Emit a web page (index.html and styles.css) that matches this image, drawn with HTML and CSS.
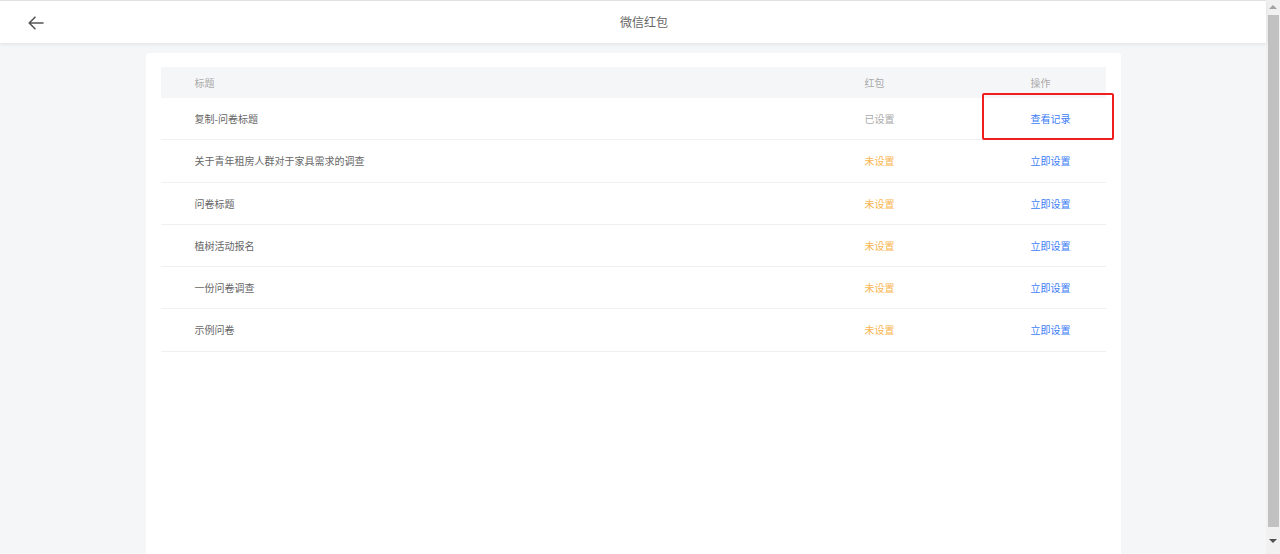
FILE: index.html
```html
<!DOCTYPE html>
<html lang="zh-CN">
<head>
<meta charset="utf-8">
<title>微信红包</title>
<link rel="stylesheet" href="styles.css">
</head>
<body>
<div class="page">
  <header class="topbar">
    <div class="back">
      <svg width="16" height="14" viewBox="0 0 16 14" fill="none" stroke="#555" stroke-width="1.6" stroke-linecap="round" stroke-linejoin="round"><path d="M15 7H1.5M7 1.2L1.2 7L7 12.8"/></svg>
    </div>
    <div class="title">微信红包</div>
    <div></div>
  </header>
  <main class="card">
    <div class="row head">
      <div class="c1">标题</div>
      <div class="c2">红包</div>
      <div class="c3">操作</div>
    </div>
    <div class="row">
      <div class="c1">复制-问卷标题</div>
      <div class="c2 done">已设置</div>
      <div class="c3 link">查看记录</div>
      <div class="mark"></div>
    </div>
    <div class="row">
      <div class="c1">关于青年租房人群对于家具需求的调查</div>
      <div class="c2 todo">未设置</div>
      <div class="c3 link">立即设置</div>
    </div>
    <div class="row">
      <div class="c1">问卷标题</div>
      <div class="c2 todo">未设置</div>
      <div class="c3 link">立即设置</div>
    </div>
    <div class="row">
      <div class="c1">植树活动报名</div>
      <div class="c2 todo">未设置</div>
      <div class="c3 link">立即设置</div>
    </div>
    <div class="row">
      <div class="c1">一份问卷调查</div>
      <div class="c2 todo">未设置</div>
      <div class="c3 link">立即设置</div>
    </div>
    <div class="row">
      <div class="c1">示例问卷</div>
      <div class="c2 todo">未设置</div>
      <div class="c3 link">立即设置</div>
    </div>
  </main>
</div>
<div class="scrollbar">
  <div class="arrow up"></div>
  <div class="thumb"></div>
  <div class="arrow down"></div>
</div>
</body>
</html>
```

FILE: styles.css
```css
html, body {
  margin: 0;
  padding: 0;
}
body {
  display: flex;
  height: 554px;
  overflow: hidden;
  font-family: "Noto Sans CJK SC", "Noto Sans", sans-serif;
  background: #f5f6f8;
}
.page {
  flex: 1;
  display: flex;
  flex-direction: column;
  background: #f5f6f8;
}
.topbar {
  height: 42px;
  border-top: 1px solid #e2e2e2;
  background: #fff;
  box-shadow: 0 1px 4px rgba(0, 0, 0, 0.09);
  display: grid;
  grid-template-columns: 1fr auto 1fr;
  align-items: center;
  padding-left: 22px;
  position: relative;
  z-index: 1;
}
.back {
  padding-left: 6px;
  display: flex;
  align-items: center;
  height: 14px;
  margin-top: 1px;
}
.title {
  font-size: 12px;
  color: #666;
  margin-top: -2px;
}
.card {
  width: 945px;
  margin: 10px auto 0;
  flex: 1;
  background: #fff;
  border-radius: 3px 3px 0 0;
  padding: 14px 15px 0;
}
.row {
  display: grid;
  grid-template-columns: 704px 166px 1fr;
  align-items: center;
  height: 41.25px;
  border-bottom: 1px solid #f0f0f2;
  font-size: 10px;
  color: #666;
  position: relative;
}
.row.head {
  height: 31px;
  border-bottom: none;
  background: #f5f6f8;
  color: #aaa;
}
.c1 {
  padding-left: 34px;
}
.done {
  color: #aaa;
}
.todo {
  color: #f9b54f;
}
.link {
  color: #3c7cf6;
}
.mark {
  position: absolute;
  left: 821px;
  top: -5px;
  width: 128px;
  height: 43px;
  border: 2px solid #f01e1e;
  border-radius: 2px;
}
.scrollbar {
  width: 14px;
  background: #f1f1f1;
  display: flex;
  flex-direction: column;
  align-items: center;
}
.thumb {
  width: 11px;
  flex: 1;
  background: #c1c1c1;
  margin: 1px 0 0;
}
.arrow {
  height: 14px;
  width: 14px;
  display: flex;
  align-items: center;
  justify-content: center;
}
.arrow::before {
  content: "";
  border-left: 4px solid transparent;
  border-right: 4px solid transparent;
}
.arrow.up::before {
  border-bottom: 4px solid #a3a3a3;
}
.arrow.down {
  height: 27px;
}
.arrow.down::before {
  border-top: 4px solid #505050;
}
```
